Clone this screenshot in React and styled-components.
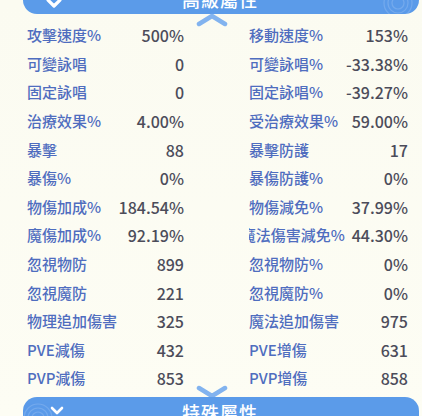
import React from 'react'
import styled, { createGlobalStyle } from 'styled-components'

const Global = createGlobalStyle`
  html, body { margin: 0; padding: 0; }
  body {
    background: #fcfcf2;
    font-family: "Noto Sans CJK TC", "Noto Sans", sans-serif;
    overflow: hidden;
  }
`

const Page = styled.div`
  position: relative;
  width: 422px;
  height: 416px;
  display: flex;
  flex-direction: column;
  background: linear-gradient(180deg, #fbfbf1 0%, #fdfdf4 100%);
`

const Bar = styled.div`
  position: relative;
  margin: 0 3px 0 23px;
  height: ${p => (p.$top ? '14px' : '19px')};
  background: #5b9be9;
  border-radius: ${p => (p.$top ? '0 0 14px 14px' : '14px 14px 0 0')};
  overflow: hidden;
  display: flex;
  justify-content: center;
  align-items: ${p => (p.$top ? 'flex-end' : 'flex-start')};
`

const BarTitle = styled.div`
  color: #ffffff;
  font-size: 18px;
  font-weight: 500;
  letter-spacing: 1px;
  line-height: 24px;
  margin-left: -2px;
  ${p => (p.$top ? 'margin-bottom: 3px;' : 'margin-top: 3px;')}
`

const BarIcon = styled.svg`
  position: absolute;
  ${p => (p.$top ? 'left: 23px; top: -8px;' : 'left: 26px; top: 9px;')}
`

const BarRings = styled.svg`
  position: absolute;
  ${p => (p.$top ? 'right: 4px; top: -14px;' : 'left: -2px; top: 4px;')}
  opacity: 0.15;
`

const Chevron = styled.svg`
  position: absolute;
  left: 196px;
  ${p => (p.$top ? 'top: 13px;' : 'top: 385px;')}
`

const Grid = styled.div`
  display: grid;
  grid-template-columns: 157px 159px;
  column-gap: 65px;
  padding: 7px 0 0 27px;
  grid-auto-rows: 28.6px;
`

const Cell = styled.div`
  display: grid;
  grid-template-columns: 1fr auto;
  column-gap: 7px;
  align-items: center;
  min-width: 0;
`

const Label = styled.div`
  display: flex;
  justify-content: ${p => (p.$clip ? 'flex-end' : 'flex-start')};
  overflow: hidden;
  white-space: nowrap;
  color: #4f6dbf;
  font-size: 15px;
  font-weight: 500;
  line-height: 20px;
`

const Value = styled.div`
  color: #4c4c5a;
  font-size: 16px;
  font-weight: 500;
  line-height: 20px;
  text-align: right;
  white-space: nowrap;
`

const rows = [
  ['攻擊速度%', '500%', '移動速度%', '153%'],
  ['可變詠唱', '0', '可變詠唱%', '-33.38%'],
  ['固定詠唱', '0', '固定詠唱%', '-39.27%'],
  ['治療效果%', '4.00%', '受治療效果%', '59.00%'],
  ['暴擊', '88', '暴擊防護', '17'],
  ['暴傷%', '0%', '暴傷防護%', '0%'],
  ['物傷加成%', '184.54%', '物傷減免%', '37.99%'],
  ['魔傷加成%', '92.19%', '魔法傷害減免%', '44.30%', true],
  ['忽視物防', '899', '忽視物防%', '0%'],
  ['忽視魔防', '221', '忽視魔防%', '0%'],
  ['物理追加傷害', '325', '魔法追加傷害', '975'],
  ['PVE減傷', '432', 'PVE增傷', '631'],
  ['PVP減傷', '853', 'PVP增傷', '858'],
]

const Rings = ({ top }) => (
  <BarRings $top={top} width="34" height="34" viewBox="0 0 34 34">
    <g fill="none" stroke="#ffffff" strokeWidth="1.2">
      <circle cx="17" cy="17" r="6" />
      <circle cx="17" cy="17" r="10" />
      <circle cx="17" cy="17" r="14" />
    </g>
  </BarRings>
)

export default function App() {
  return (
    <Page>
      <Global />
      <Bar $top>
        <Rings top />
        <BarIcon $top width="16" height="16" viewBox="0 0 16 16">
          <path d="M8 2 L14 8 L8 14 L2 8 Z" fill="none" stroke="#ffffff" strokeWidth="3.2" strokeLinejoin="round" />
        </BarIcon>
        <BarTitle $top>高級屬性</BarTitle>
      </Bar>
      <Chevron $top width="32" height="14" viewBox="0 0 32 14">
        <path d="M3 11 L16 3 L29 11" fill="none" stroke="#82b3ef" strokeWidth="4.5" strokeLinecap="round" strokeLinejoin="round" />
      </Chevron>
      <Grid>
        {rows.map(r => (
          <React.Fragment key={r[0]}>
            <Cell>
              <Label>{r[0]}</Label>
              <Value>{r[1]}</Value>
            </Cell>
            <Cell>
              <Label $clip={r[4]}>{r[2]}</Label>
              <Value>{r[3]}</Value>
            </Cell>
          </React.Fragment>
        ))}
      </Grid>
      <div style={{ flex: 1 }} />
      <Chevron width="32" height="14" viewBox="0 0 32 14">
        <path d="M3 3 L16 11 L29 3" fill="none" stroke="#82b3ef" strokeWidth="4.5" strokeLinecap="round" strokeLinejoin="round" />
      </Chevron>
      <Bar>
        <Rings />
        <BarIcon width="16" height="12" viewBox="0 0 16 12">
          <path d="M3 2 L8 7 L13 2" fill="none" stroke="#ffffff" strokeWidth="2.6" strokeLinecap="round" strokeLinejoin="round" />
        </BarIcon>
        <BarTitle>特殊屬性</BarTitle>
      </Bar>
    </Page>
  )
}
